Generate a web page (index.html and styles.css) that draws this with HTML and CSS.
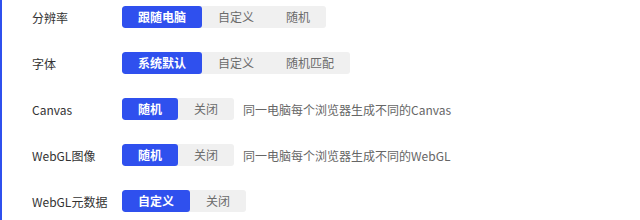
FILE: index.html
```html
<!DOCTYPE html>
<html>
<head>
<meta charset="utf-8">
<link rel="stylesheet" href="styles.css">
</head>
<body>
<div class="panel">
  <div class="row">
    <div class="label">分辨率</div>
    <div class="seg">
      <span class="opt on">跟随电脑</span><span class="opt">自定义</span><span class="opt">随机</span>
    </div>
  </div>
  <div class="row">
    <div class="label">字体</div>
    <div class="seg">
      <span class="opt on">系统默认</span><span class="opt">自定义</span><span class="opt">随机匹配</span>
    </div>
  </div>
  <div class="row">
    <div class="label">Canvas</div>
    <div class="seg">
      <span class="opt on">随机</span><span class="opt">关闭</span>
    </div>
    <div class="hint">同一电脑每个浏览器生成不同的Canvas</div>
  </div>
  <div class="row">
    <div class="label">WebGL图像</div>
    <div class="seg">
      <span class="opt on">随机</span><span class="opt">关闭</span>
    </div>
    <div class="hint">同一电脑每个浏览器生成不同的WebGL</div>
  </div>
  <div class="row">
    <div class="label">WebGL元数据</div>
    <div class="seg">
      <span class="opt on">自定义</span><span class="opt">关闭</span>
    </div>
  </div>
</div>
</body>
</html>
```
FILE: styles.css
```css
html, body {
  margin: 0;
  padding: 0;
  background: #ffffff;
}
body {
  font-family: "Noto Sans CJK SC", "Noto Sans", sans-serif;
  font-size: 12px;
  color: #333333;
}
.panel {
  height: 220px;
  box-sizing: border-box;
  border-left: 2px solid #2f50ee;
  padding: 6px 0 0 30px;
  display: flex;
  flex-direction: column;
  gap: 24px;
}
.row {
  display: flex;
  align-items: center;
  height: 22px;
}
.label {
  width: 90px;
  flex: none;
  color: #333333;
}
.seg {
  display: flex;
  height: 22px;
  background: #f0f0f0;
  border-radius: 3px;
  overflow: hidden;
}
.opt {
  display: flex;
  align-items: center;
  padding: 0 16px;
  color: #6b6b6b;
  line-height: 22px;
}
.opt.on {
  background: #2f50ee;
  color: #ffffff;
  font-weight: 700;
  border-radius: 3px;
}
.hint {
  margin-left: 9px;
  color: #666666;
}
```
